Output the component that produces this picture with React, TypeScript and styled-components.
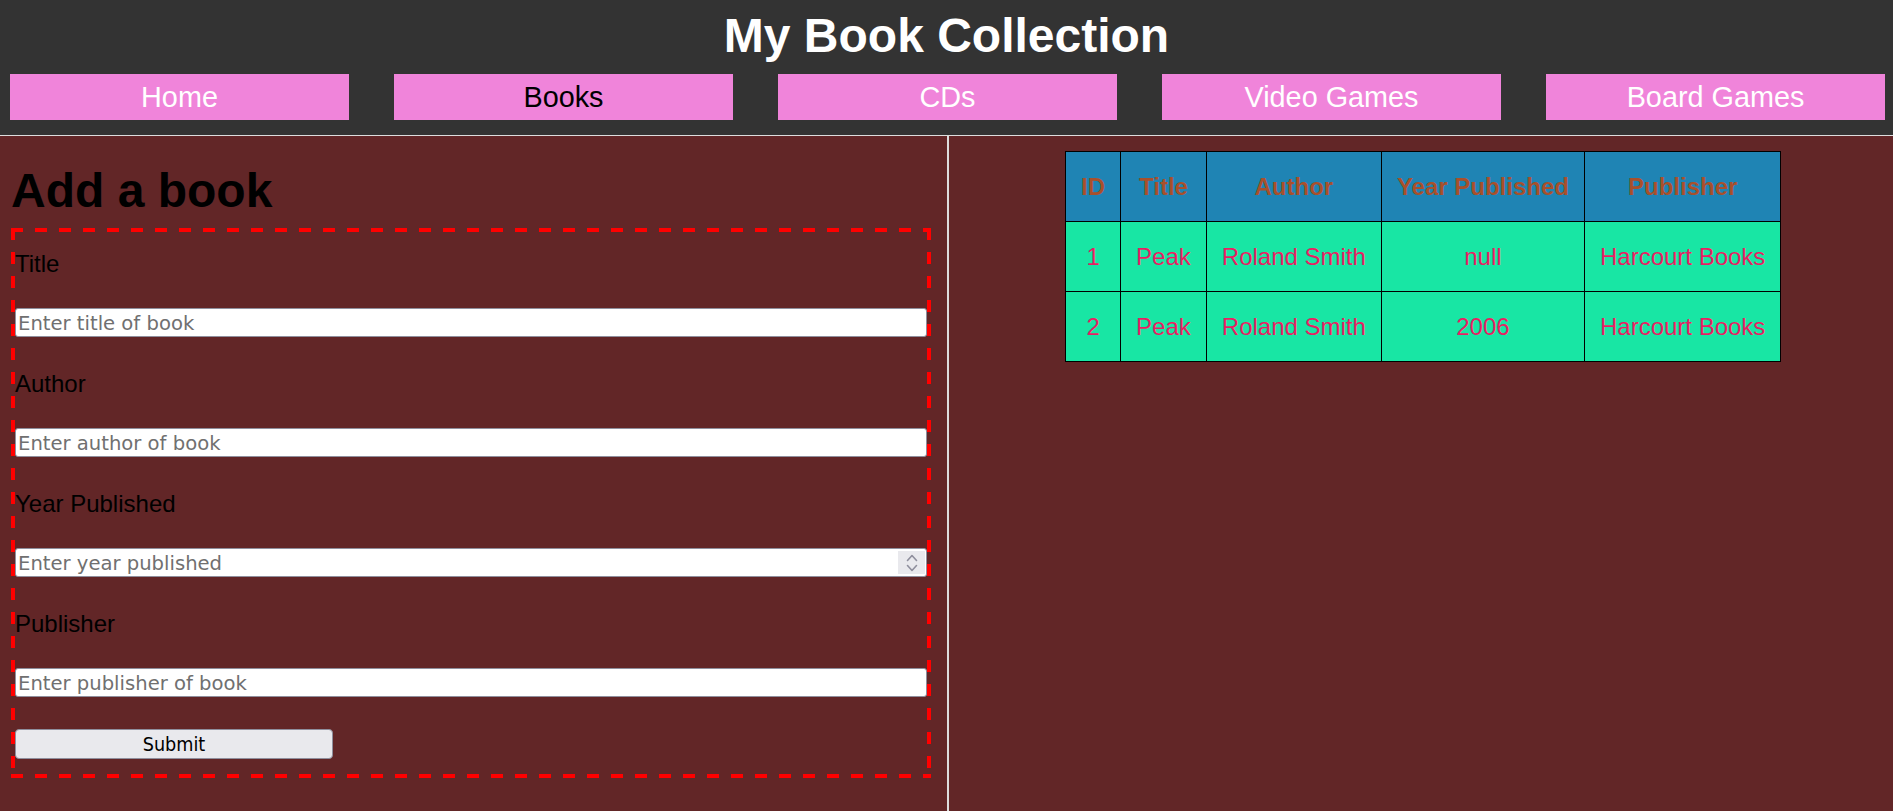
import React from "react";
import styled, { createGlobalStyle } from "styled-components";

const GlobalStyle = createGlobalStyle`
  html, body { margin: 0; padding: 0; }
  body {
    font-family: "Liberation Sans", Arial, sans-serif;
    background: #622627;
  }
  * { box-sizing: border-box; }
`;

const Page = styled.div`
  display: flex;
  flex-direction: column;
  min-height: 100vh;
`;

const Header = styled.header`
  background: #333333;
  padding: 8px 0 15px;
  border-bottom: 1px solid #dddddd;
`;

const SiteTitle = styled.h1`
  margin: 0;
  text-align: center;
  color: #ffffff;
  font-size: 48px;
  line-height: 55px;
  font-weight: bold;
`;

const Nav = styled.nav`
  display: flex;
  justify-content: space-between;
  margin-top: 11px;
  padding: 0 8px 0 10px;
`;

const NavLink = styled.a<{ $active?: boolean }>`
  width: 339px;
  height: 46px;
  display: flex;
  align-items: center;
  justify-content: center;
  background: #f084da;
  color: ${(p) => (p.$active ? "#000000" : "#ffffff")};
  font-size: 28.8px;
  text-decoration: none;
`;

const Main = styled.main`
  flex: 1;
  display: grid;
  grid-template-columns: 1fr 1fr;
`;

const FormColumn = styled.section`
  padding: 27px 15.5px 20px 11px;
`;

const TableColumn = styled.section`
  border-left: 2px solid #dddddd;
  padding: 15px 0 0 5px;
  display: flex;
  justify-content: center;
  align-items: flex-start;
`;

const Heading = styled.h2`
  margin: 0 0 10px;
  font-size: 48px;
  line-height: 55px;
  font-weight: bold;
  color: #000000;
`;

const dash = (dir: string) =>
  `repeating-linear-gradient(${dir}, #ff0000 0 12px, transparent 12px 24px)`;

const BookForm = styled.form`
  padding: 4px 4px 19px;
  background:
    ${dash("90deg")} top left / 100% 4px no-repeat,
    ${dash("90deg")} bottom left / 100% 4px no-repeat,
    ${dash("180deg")} top left / 4px 100% no-repeat,
    ${dash("180deg")} top right / 4px 100% no-repeat;
  display: flex;
  flex-direction: column;
  align-items: flex-start;
`;

const Field = styled.div`
  align-self: stretch;
  display: flex;
  flex-direction: column;
  gap: 30px;
  padding-top: 18px;
  margin-bottom: 15px;
`;

const Label = styled.label`
  font-size: 24px;
  line-height: 28px;
  color: #000000;
`;

const InputWrap = styled.div`
  position: relative;
`;

const TextInput = styled.input`
  display: block;
  width: 100%;
  height: 29px;
  margin: 0;
  padding: 2px 2px 0;
  border: 1px solid #8f8f9d;
  border-radius: 3px;
  background: #ffffff;
  font-family: "DejaVu Sans", sans-serif;
  font-size: 19.6px;
  color: #000000;
  &::placeholder {
    color: #707070;
    opacity: 1;
  }
  &::-webkit-inner-spin-button,
  &::-webkit-outer-spin-button {
    -webkit-appearance: none;
    margin: 0;
  }
`;

const Spinner = styled.span`
  position: absolute;
  right: 2px;
  top: 3px;
  bottom: 3px;
  width: 27px;
  background: #e9e9ed;
  display: flex;
  align-items: center;
  justify-content: center;
  pointer-events: none;
`;

const SubmitButton = styled.button`
  width: 318px;
  height: 30px;
  margin-top: 17px;
  padding: 1px 0 0;
  background: #e9e9ed;
  border: 1px solid #8f8f9d;
  border-radius: 4px;
  font-family: "DejaVu Sans Condensed", "DejaVu Sans", sans-serif;
  font-size: 19.6px;
  color: #000000;
`;

const BookTable = styled.table`
  border-collapse: collapse;
  font-size: 24px;
`;

const HeadCell = styled.th`
  border: 1px solid #000000;
  padding: 21px 15px;
  line-height: 27px;
  background: #1f84b4;
  color: #a8502b;
  font-weight: bold;
  text-align: center;
`;

const Cell = styled.td`
  border: 1px solid #000000;
  padding: 21px 15px;
  line-height: 27px;
  background: #18e6a4;
  color: #e91e63;
  text-align: center;
`;

const navItems = ["Home", "Books", "CDs", "Video Games", "Board Games"];

const books = [
  { id: 1, title: "Peak", author: "Roland Smith", year: "null", publisher: "Harcourt Books" },
  { id: 2, title: "Peak", author: "Roland Smith", year: "2006", publisher: "Harcourt Books" },
];

const fields = [
  { id: "title", label: "Title", placeholder: "Enter title of book", type: "text" },
  { id: "author", label: "Author", placeholder: "Enter author of book", type: "text" },
  { id: "year", label: "Year Published", placeholder: "Enter year published", type: "number" },
  { id: "publisher", label: "Publisher", placeholder: "Enter publisher of book", type: "text" },
];

function SpinIcon() {
  return (
    <svg width="12" height="20" viewBox="0 0 12 20" fill="none" stroke="#8f8f9d" strokeWidth="1.6" strokeLinecap="round" strokeLinejoin="round">
      <path d="M1.5 7.5 L6 2.5 L10.5 7.5" />
      <path d="M1.5 12.5 L6 17.5 L10.5 12.5" />
    </svg>
  );
}

export default function App() {
  return (
    <Page>
      <GlobalStyle />
      <Header>
        <SiteTitle>My Book Collection</SiteTitle>
        <Nav>
          {navItems.map((item) => (
            <NavLink key={item} href="#" $active={item === "Books"}>
              {item}
            </NavLink>
          ))}
        </Nav>
      </Header>
      <Main>
        <FormColumn>
          <Heading>Add a book</Heading>
          <BookForm onSubmit={(e) => e.preventDefault()}>
            {fields.map((f) => (
              <Field key={f.id}>
                <Label htmlFor={f.id}>{f.label}</Label>
                <InputWrap>
                  <TextInput id={f.id} type={f.type} placeholder={f.placeholder} />
                  {f.type === "number" && (
                    <Spinner>
                      <SpinIcon />
                    </Spinner>
                  )}
                </InputWrap>
              </Field>
            ))}
            <SubmitButton type="submit">Submit</SubmitButton>
          </BookForm>
        </FormColumn>
        <TableColumn>
          <BookTable>
            <thead>
              <tr>
                <HeadCell>ID</HeadCell>
                <HeadCell>Title</HeadCell>
                <HeadCell>Author</HeadCell>
                <HeadCell>Year Published</HeadCell>
                <HeadCell>Publisher</HeadCell>
              </tr>
            </thead>
            <tbody>
              {books.map((b) => (
                <tr key={b.id}>
                  <Cell>{b.id}</Cell>
                  <Cell>{b.title}</Cell>
                  <Cell>{b.author}</Cell>
                  <Cell>{b.year}</Cell>
                  <Cell>{b.publisher}</Cell>
                </tr>
              ))}
            </tbody>
          </BookTable>
        </TableColumn>
      </Main>
    </Page>
  );
}
